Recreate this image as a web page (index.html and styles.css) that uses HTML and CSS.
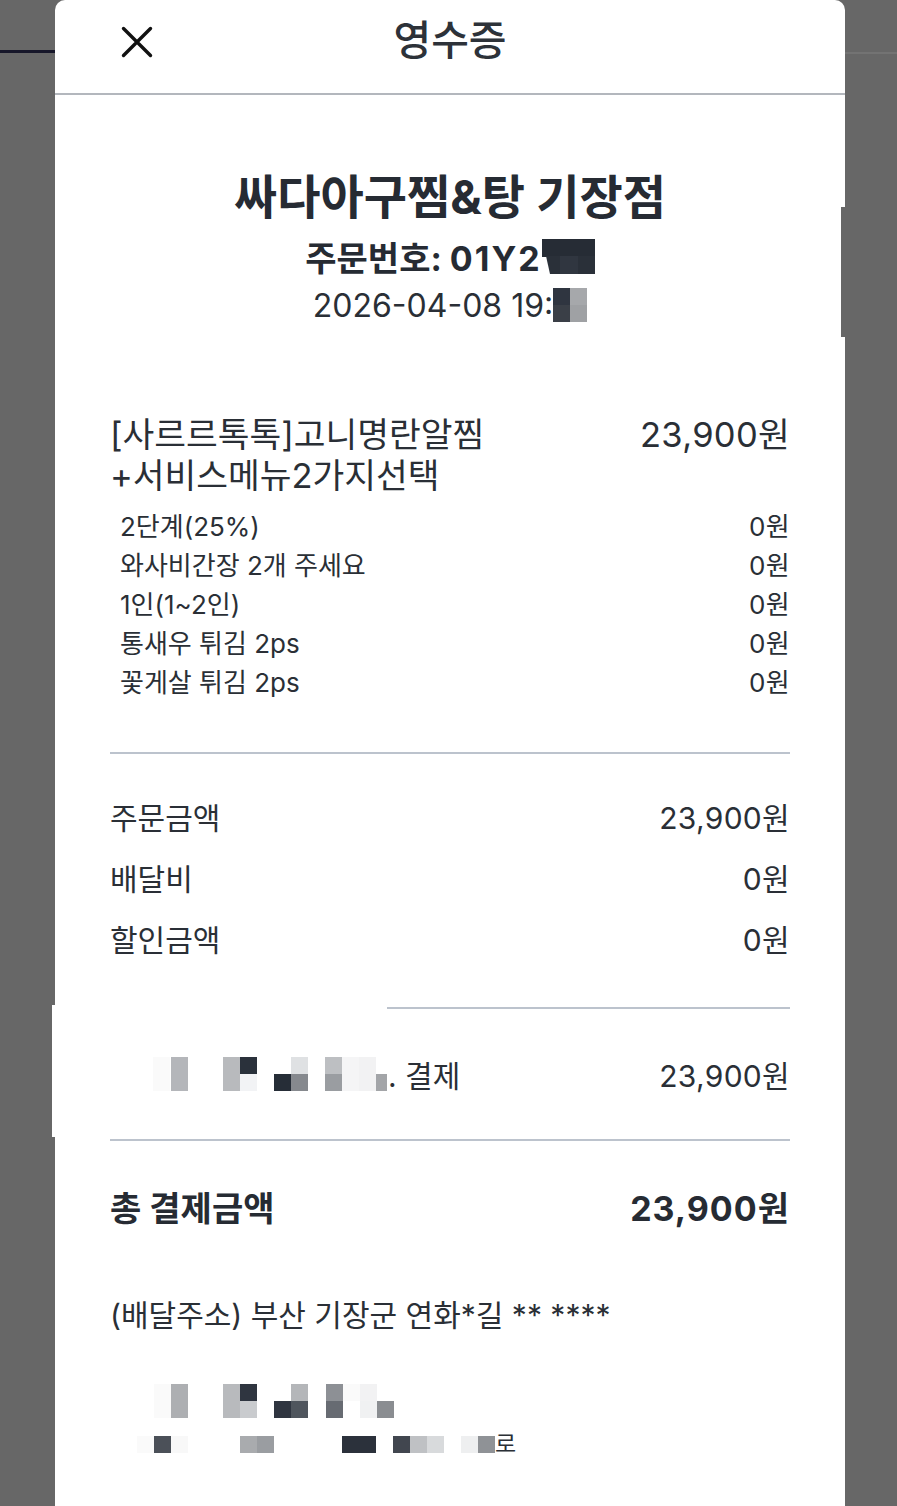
FILE: index.html
```html
<!DOCTYPE html>
<html lang="ko">
<head>
<meta charset="utf-8">
<title>영수증</title>
<link rel="stylesheet" href="styles.css">
</head>
<body>
<div class="screen">
  <div class="side side-left">
    <div class="bgline bgline-dark"></div>
    <div class="patch-white"></div>
  </div>

  <div class="modal">
    <div class="edge-patch"></div>
    <header class="head">
      <svg class="close" viewBox="0 0 32 32" aria-label="닫기">
        <path d="M2.5 2.5 L29.5 29.5 M29.5 2.5 L2.5 29.5" stroke="#111" stroke-width="3.4" stroke-linecap="round" fill="none"/>
      </svg>
      <h1 class="title">영수증</h1>
    </header>

    <main class="content">
      <section class="store">
        <h2 class="store-name">싸다아구찜&amp;탕 기장점</h2>
        <div class="order-no">
          <span>주문번호: <span class="latin">01Y2</span></span>
          <svg class="mosaic" width="53" height="35" viewBox="0 0 53 35">
            <rect x="0" y="0" width="53" height="18" fill="#262c35"/>
            <path d="M4 17 L12 17 L12 35 L8 35 Z" fill="#2a3039"/>
            <rect x="12" y="17" width="41" height="18" fill="#2a3039"/>
            <rect x="18" y="17" width="18" height="18" fill="#303640"/>
          </svg>
        </div>
        <div class="date">
          <span>2026-04-08 19:</span>
          <svg class="mosaic" width="34" height="34" viewBox="0 0 34 34">
            <rect x="0" y="0" width="17" height="17" fill="#2f3540"/>
            <rect x="0" y="17" width="17" height="17" fill="#3a3f47"/>
            <rect x="17" y="0" width="17" height="17" fill="#a6a8ab"/>
            <rect x="17" y="17" width="17" height="17" fill="#9fa1a4"/>
          </svg>
        </div>
      </section>

      <section class="item">
        <div class="item-main">
          <div class="item-name">[사르르톡톡]고니명란알찜<br>+서비스메뉴2가지선택</div>
          <div class="num">23,900원</div>
        </div>
        <ul class="options">
          <li class="opt"><span>2단계(25%)</span><span class="num">0원</span></li>
          <li class="opt"><span>와사비간장 2개 주세요</span><span class="num">0원</span></li>
          <li class="opt"><span>1인(1~2인)</span><span class="num">0원</span></li>
          <li class="opt"><span>통새우 튀김 2ps</span><span class="num">0원</span></li>
          <li class="opt"><span>꽃게살 튀김 2ps</span><span class="num">0원</span></li>
        </ul>
      </section>

      <div class="divider divider-main"></div>

      <section class="summary">
        <div class="row"><span>주문금액</span><span class="num">23,900원</span></div>
        <div class="row"><span>배달비</span><span class="num">0원</span></div>
        <div class="row"><span>할인금액</span><span class="num">0원</span></div>
      </section>

      <div class="divider divider-partial"></div>

      <section class="pay">
        <div class="pay-method">
          <svg class="mosaic" width="234" height="34" viewBox="0 0 234 34">
            <rect x="0" y="0" width="17" height="34" fill="#fafafa"/>
            <rect x="18" y="0" width="17" height="34" fill="#b4b6ba"/>
            <rect x="70" y="0" width="17" height="34" fill="#b8babd"/>
            <rect x="87" y="0" width="17" height="17" fill="#2a313b"/>
            <rect x="87" y="17" width="17" height="17" fill="#f2f3f5"/>
            <rect x="121" y="17" width="17" height="17" fill="#262d37"/>
            <rect x="138" y="0" width="17" height="17" fill="#dfe1e3"/>
            <rect x="138" y="17" width="17" height="17" fill="#86898e"/>
            <rect x="172" y="0" width="17" height="17" fill="#bdbfc2"/>
            <rect x="172" y="17" width="17" height="17" fill="#9a9da1"/>
            <rect x="189" y="0" width="17" height="34" fill="#f5f5f6"/>
            <rect x="206" y="0" width="17" height="34" fill="#f2f2f3"/>
            <rect x="223" y="17" width="11" height="17" fill="#a3a5a8"/>
          </svg>
          <span class="pay-label">. 결제</span>
        </div>
        <span class="num">23,900원</span>
      </section>

      <div class="divider"></div>

      <section class="total">
        <span>총 결제금액</span>
        <span class="num">23,900원</span>
      </section>

      <p class="address">(배달주소) 부산 기장군 연화*길 ** ****</p>

      <div class="addr-mosaic">
        <svg class="mosaic mosaic-a" width="240" height="34" viewBox="0 0 240 34">
          <rect x="0" y="0" width="17" height="34" fill="#fafafa"/>
          <rect x="17" y="0" width="17" height="34" fill="#adafb2"/>
          <rect x="69" y="0" width="17" height="34" fill="#b8babd"/>
          <rect x="86" y="0" width="17" height="17" fill="#2f3540"/>
          <rect x="86" y="17" width="17" height="17" fill="#c9cbce"/>
          <rect x="120" y="17" width="17" height="17" fill="#2f3540"/>
          <rect x="137" y="0" width="17" height="17" fill="#b4b6b9"/>
          <rect x="137" y="17" width="17" height="17" fill="#4f555d"/>
          <rect x="172" y="0" width="17" height="17" fill="#8d9095"/>
          <rect x="172" y="17" width="17" height="17" fill="#676b72"/>
          <rect x="189" y="0" width="17" height="17" fill="#fafafa"/>
          <rect x="206" y="0" width="17" height="17" fill="#f2f2f3"/>
          <rect x="206" y="17" width="17" height="17" fill="#f0f1f2"/>
          <rect x="223" y="17" width="17" height="17" fill="#8a8d91"/>
        </svg>
        <div class="addr-line2">
          <svg class="mosaic" width="358" height="17" viewBox="0 0 358 17">
            <rect x="0" y="0" width="17" height="17" fill="#fafafa"/>
            <rect x="17" y="0" width="17" height="17" fill="#4b5058"/>
            <rect x="34" y="0" width="17" height="17" fill="#f8f8f8"/>
            <rect x="103" y="0" width="17" height="17" fill="#a9abae"/>
            <rect x="120" y="0" width="17" height="17" fill="#9a9da1"/>
            <rect x="205" y="0" width="34" height="17" fill="#2b313b"/>
            <rect x="256" y="0" width="17" height="17" fill="#41464f"/>
            <rect x="273" y="0" width="17" height="17" fill="#bfc1c4"/>
            <rect x="290" y="0" width="17" height="17" fill="#d8dadc"/>
            <rect x="324" y="0" width="17" height="17" fill="#eeeff0"/>
            <rect x="341" y="0" width="17" height="17" fill="#8f9296"/>
          </svg>
          <span class="addr-end">로</span>
        </div>
      </div>
    </main>
  </div>

  <div class="side side-right">
    <div class="bgline bgline-light"></div>
  </div>
</div>
</body>
</html>
```

FILE: styles.css
```css
* { box-sizing: border-box; }

html, body {
  margin: 0;
  padding: 0;
}

body {
  font-family: Inter, "Noto Sans CJK KR", sans-serif;
  color: #2a2f36;
  background: #676767;
}

.screen {
  display: flex;
  width: 897px;
  height: 1506px;
  overflow: hidden;
  background: #676767;
}

.side { flex: none; display: flex; flex-direction: column; }
.side-left { width: 55px; align-items: flex-end; }
.side-right { flex: 1; }

.bgline-dark {
  margin-top: 50px;
  width: 100%;
  height: 3px;
  background: #17172a;
}
.bgline-light {
  margin-top: 52px;
  height: 2px;
  background: #737373;
}

.patch-white {
  margin-top: 952px;
  width: 3px;
  height: 132px;
  background: #fff;
}

.modal {
  position: relative;
  flex: none;
  width: 790px;
  background: #fff;
  border-radius: 10px 10px 0 0;
}

.edge-patch {
  position: absolute;
  right: 0;
  top: 207px;
  width: 4px;
  height: 130px;
  background: #676767;
}

/* header */
.head {
  height: 95px;
  border-bottom: 2px solid #b3b7bd;
  display: grid;
  grid-template-columns: 1fr auto 1fr;
  align-items: start;
}
.close {
  margin: 26px 0 0 66px;
  width: 32px;
  height: 32px;
}
.title {
  grid-column: 2;
  margin: 18px 0 0;
  font-size: 41px;
  line-height: 44px;
  font-weight: 500;
  color: #2d3239;
}

.content {
  padding: 0 55px;
}

.mosaic { display: block; flex: none; }

/* store */
.store {
  padding-top: 76px;
  text-align: center;
}
.store-name {
  margin: 0;
  font-size: 47px;
  line-height: 52px;
  font-weight: 700;
  color: #262b33;
}
.order-no {
  height: 66px;
  display: flex;
  justify-content: center;
  align-items: center;
  font-size: 34px;
  font-weight: 700;
  color: #262b33;
}
.order-no .latin {
  letter-spacing: 2px;
}
.date {
  height: 32px;
  display: flex;
  justify-content: center;
  align-items: center;
  font-size: 32px;
}

/* item */
.item { padding-top: 93px; }
.item-main {
  display: flex;
  justify-content: space-between;
  font-size: 34.5px;
  line-height: 41px;
}
.options {
  list-style: none;
  margin: 11px 0 0;
  padding: 0 0 0 10px;
  font-size: 26px;
  line-height: 39px;
}
.opt {
  display: flex;
  justify-content: space-between;
}

.divider {
  height: 2px;
  background: #bcc3cd;
}
.divider-main { margin-top: 50px; }

/* summary */
.summary {
  margin-top: 34px;
  font-size: 30px;
}
.row {
  display: flex;
  justify-content: space-between;
  line-height: 61px;
}
.num { letter-spacing: 0.3px; }

.divider-partial {
  margin-top: 36px;
  margin-left: 277px;
}

/* payment */
.pay {
  height: 130px;
  display: flex;
  justify-content: space-between;
  align-items: center;
  font-size: 30px;
}
.pay-method {
  display: flex;
  align-items: center;
  padding-left: 43px;
}
.pay-label { margin-left: 1px; }

/* total */
.total {
  margin-top: 43px;
  display: flex;
  justify-content: space-between;
  font-size: 34px;
  line-height: 50px;
  font-weight: 700;
  color: #262b33;
}
.total .num { letter-spacing: 1px; }

.address {
  margin: 61px 0 0;
  font-size: 30px;
  line-height: 40px;
}

.addr-mosaic { margin-top: 49px; }
.mosaic-a { margin-left: 44px; }
.addr-line2 {
  margin-top: 18px;
  margin-left: 27px;
  display: flex;
  align-items: center;
}
.addr-end {
  font-size: 23px;
  line-height: 17px;
}
```
